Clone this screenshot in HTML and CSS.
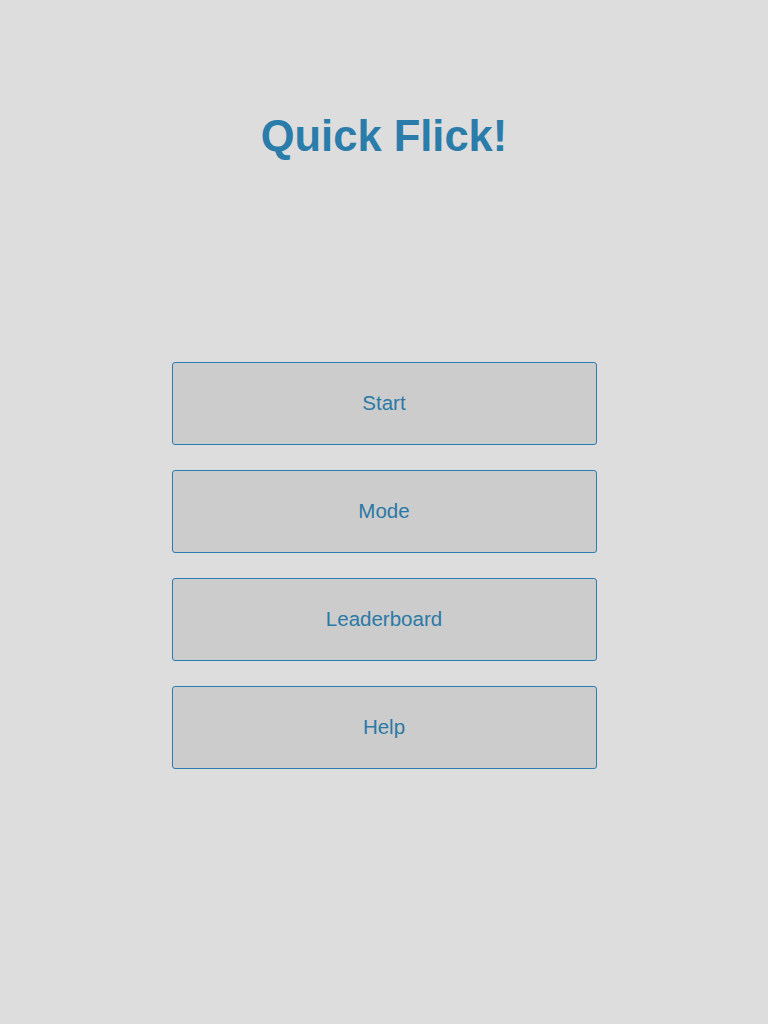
FILE: index.html
```html
<!DOCTYPE html>
<html lang="en">
<head>
    <meta charset="UTF-8">
    <meta name="viewport" content="width=device-width, initial-scale=1.0">
    <title>Quick Flick!</title>
    <link rel="stylesheet" href="styles.css">
</head>
<body>
    <header class="title">Quick Flick!</header>
    <div class="menu">
        <button class="menu-btn">Start</button>
        <button class="menu-btn">Mode</button>
        <button class="menu-btn">Leaderboard</button>
        <button class="menu-btn">Help</button>
    </div>
</body>
</html>
```

FILE: styles.css
```css
body {
    font-family: 'Liberation Sans', Arial, Helvetica, sans-serif;
    margin: 0;
    background-color: #dddddd;
    height: 1024px;
}
.title {
    padding-top: 110px;
    height: 53px;
    line-height: 53px;
    text-align: center;
    font-size: 43.5px;
    font-weight: bold;
    color: #2a7caa;
}
.menu {
    display: flex;
    flex-direction: column;
    align-items: center;
    gap: 25px;
    margin-top: 199px;
}
.menu-btn {
    width: 425px;
    height: 83px;
    background: #cccccc;
    border: 1px solid #2a7db0;
    border-radius: 3px;
    color: #2b79a6;
    font-family: inherit;
    font-size: 20.5px;
    padding: 0 0 2px;
    cursor: pointer;
}
```
